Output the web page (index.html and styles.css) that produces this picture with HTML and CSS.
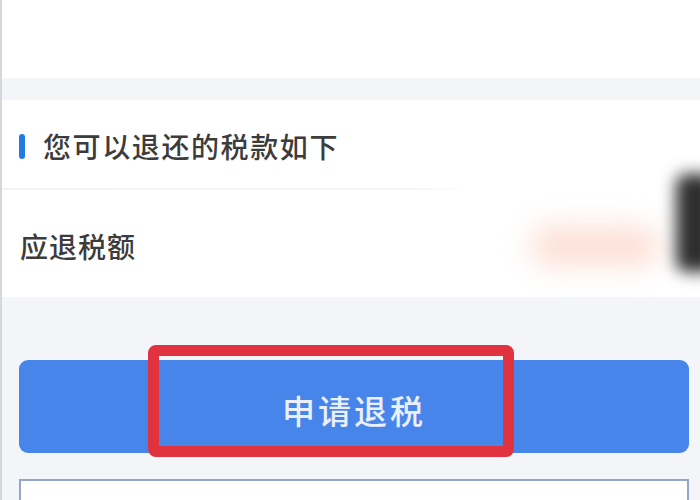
FILE: index.html
```html
<!DOCTYPE html>
<html lang="zh-CN">
<head>
<meta charset="utf-8">
<title>申请退税</title>
<link rel="stylesheet" href="styles.css">
</head>
<body>
<div class="screen">
  <div class="top"></div>
  <section class="card">
    <div class="card-head">
      <span class="mark"></span>
      <h2 class="title">您可以退还的税款如下</h2>
    </div>
    <div class="divider"></div>
    <div class="row">
      <span class="label">应退税额</span>
      <span class="amount">¥•••••</span>
    </div>
  </section>
  <div class="actions">
    <div class="btn-wrap">
      <button class="btn">申请退税</button>
      <span class="highlight"></span>
    </div>
    <div class="box"></div>
  </div>
  <span class="edge"></span>
</div>
</body>
</html>
```

FILE: styles.css
```css
* { box-sizing: border-box; }
html, body {
  margin: 0;
  padding: 0;
  background: #f3f5f9;
}
body {
  font-family: "Noto Sans CJK SC", "Noto Sans", sans-serif;
  width: 700px;
  height: 500px;
  overflow: hidden;
}
.screen {
  position: relative;
  width: 700px;
  height: 500px;
  border-left: 2px solid #d6d7db;
  background: #f3f5f9;
  overflow: hidden;
}
.top {
  height: 78px;
  background: #ffffff;
  margin-bottom: 22px;
}
.card {
  background: #ffffff;
  height: 197px;
  display: flex;
  flex-direction: column;
}
.card-head {
  height: 88px;
  display: flex;
  align-items: center;
  padding-left: 17px;
  padding-top: 4px;
}
.mark {
  width: 6px;
  height: 25px;
  border-radius: 3px;
  background: #1f7ce3;
  margin-right: 18px;
}
.title {
  margin: 0;
  font-size: 28px;
  font-weight: 500;
  color: #3c3c3c;
  letter-spacing: 1.6px;
}
.divider {
  height: 2px;
  width: 470px;
  background: linear-gradient(to right, #f3f3f5, #f4f4f6 85%, rgba(244,244,246,0));
}
.row {
  flex: 1;
  display: flex;
  align-items: center;
  justify-content: space-between;
  padding-left: 18px;
  padding-top: 4px;
}
.label {
  font-size: 28px;
  font-weight: 500;
  color: #3c3c3c;
  letter-spacing: 1px;
}
.amount {
  width: 130px;
  height: 40px;
  margin-right: 40px;
  border-radius: 20px;
  background: #fde0d6;
  color: transparent;
  filter: blur(14px);
}
.actions {
  padding: 63px 11px 0 17px;
}
.btn-wrap {
  position: relative;
  height: 93px;
}
.btn {
  display: block;
  width: 100%;
  height: 93px;
  border: none;
  border-radius: 9px;
  background: #4785ea;
  color: #e9effb;
  font-family: "Noto Sans CJK SC", "Noto Sans", sans-serif;
  font-size: 33px;
  font-weight: 500;
  letter-spacing: 3px;
  padding: 0;
  padding-top: 6px;
}
.highlight {
  position: absolute;
  left: 129px;
  top: -15px;
  width: 366px;
  height: 112px;
  border: 11px solid #e1333f;
  border-radius: 8px;
}
.box {
  margin-top: 26px;
  height: 40px;
  background: #ffffff;
  border: 2px solid #93a6c9;
  border-bottom: none;
}
.edge {
  position: absolute;
  right: -16px;
  top: 174px;
  width: 40px;
  height: 98px;
  border-radius: 10px;
  background: #2e2e2e;
  filter: blur(8px);
}
```
